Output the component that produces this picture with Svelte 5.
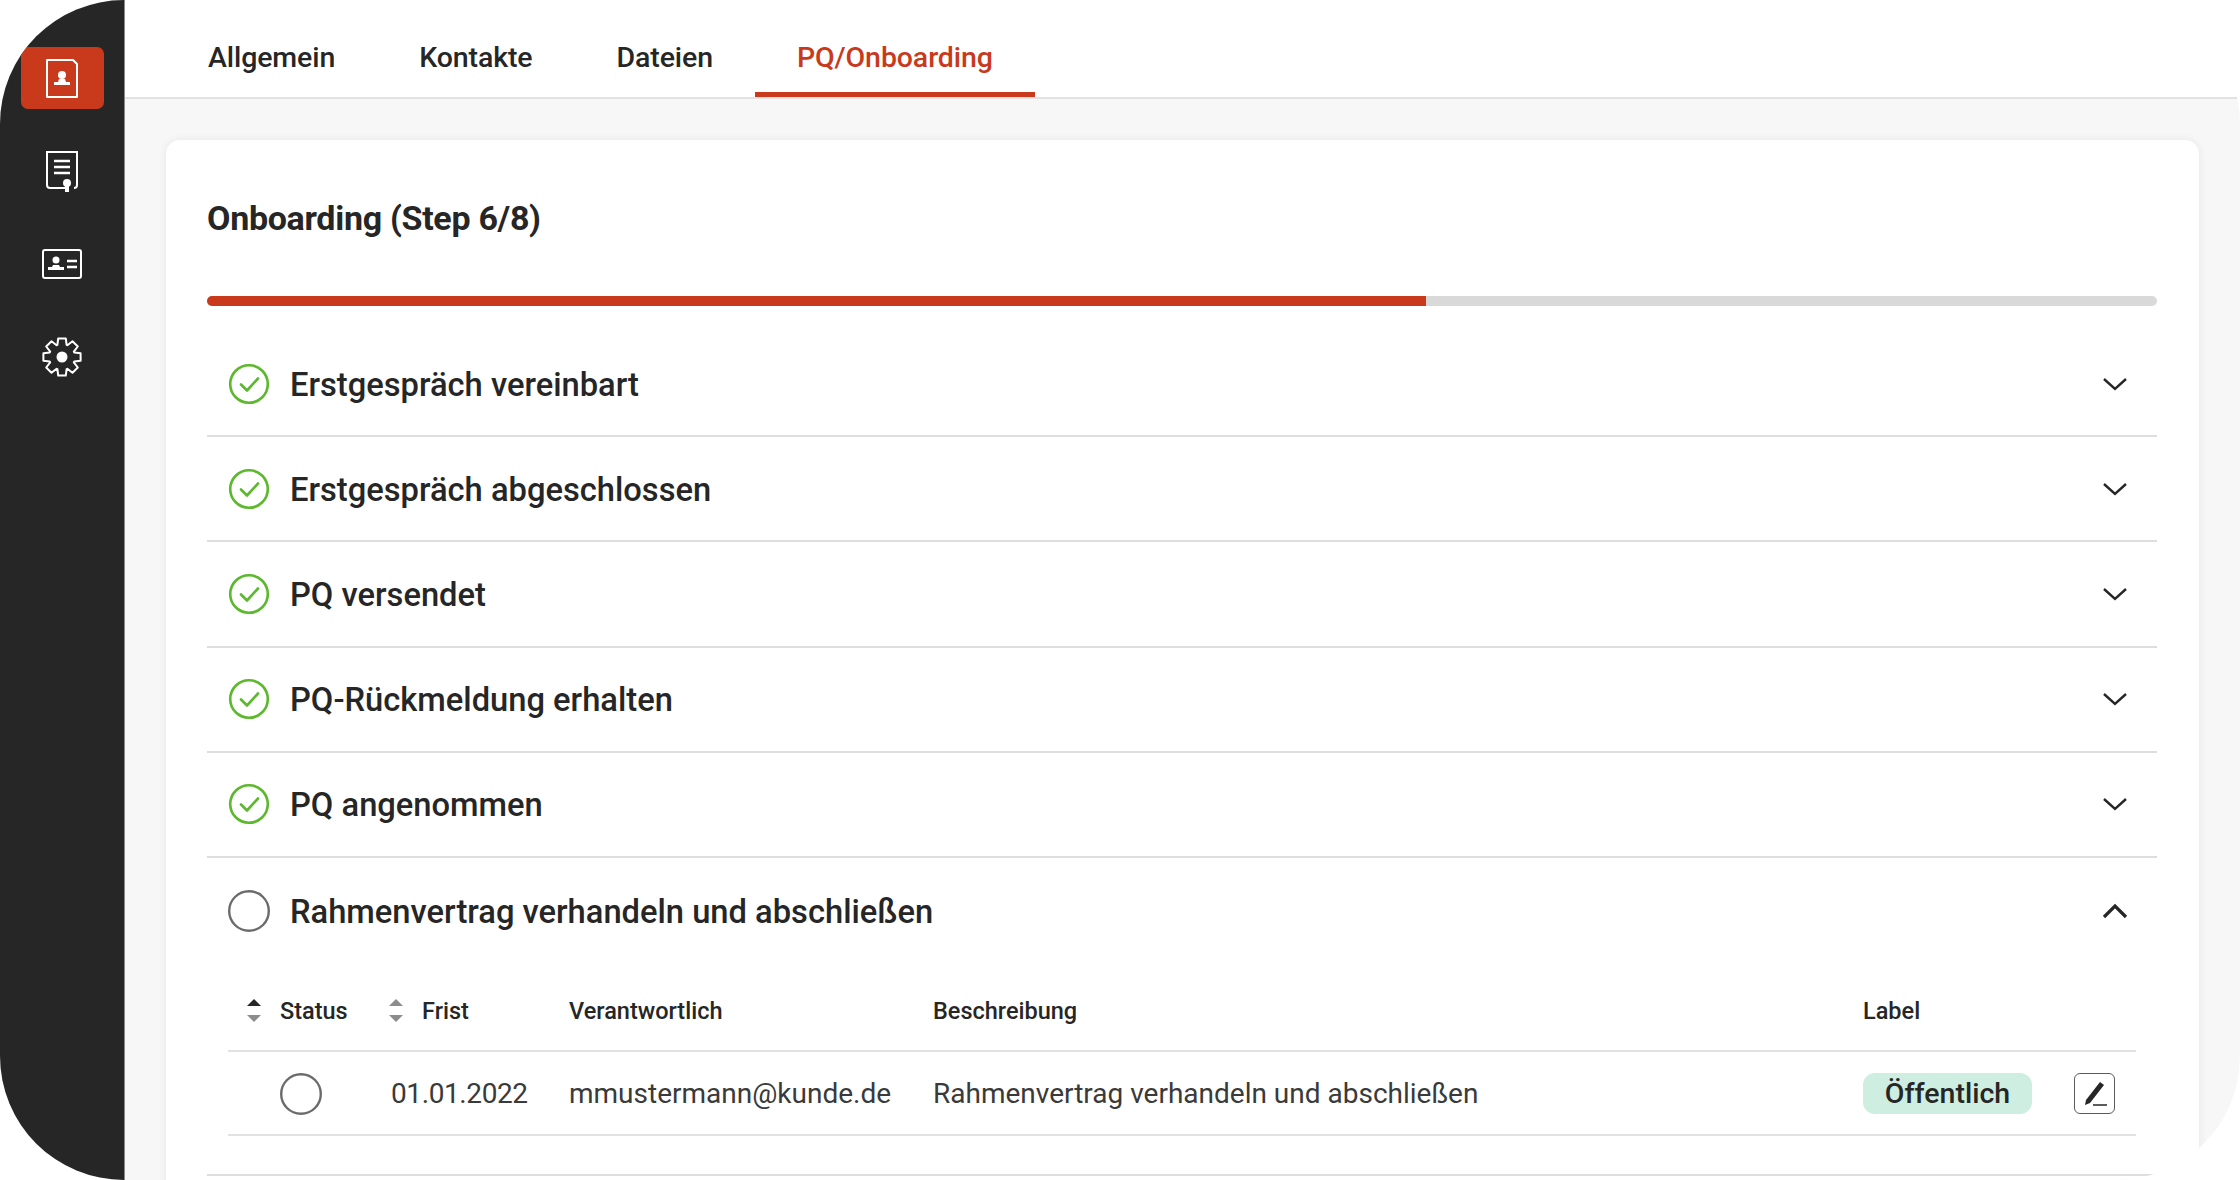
<script>
  const tabs = ['Allgemein', 'Kontakte', 'Dateien', 'PQ/Onboarding'];
  const done = ['Erstgespräch vereinbart', 'Erstgespräch abgeschlossen', 'PQ versendet', 'PQ-Rückmeldung erhalten', 'PQ angenommen'];

  // 8 tooth gear for the settings icon
  function gearPath(cx, cy) {
    const pts = [];
    for (let i = 0; i < 8; i++) {
      const a = (i * Math.PI) / 4 - Math.PI / 2;
      [[-0.36, 13], [-0.2, 19], [0.2, 19], [0.36, 13]].forEach(([d, r]) => {
        pts.push(`${(cx + r * Math.cos(a + d)).toFixed(1)} ${(cy + r * Math.sin(a + d)).toFixed(1)}`);
      });
    }
    return 'M' + pts.join('L') + 'Z';
  }
</script>

<div class="app">
  <nav class="sidebar">
    <button class="nav-btn active" aria-label="Kontakt">
      <svg width="40" height="44" viewBox="0 0 40 44" fill="none" stroke="#fff" stroke-width="2">
        <path d="M5 4h26l4 4v33H5z" stroke-linejoin="round" />
        <circle cx="20" cy="19" r="4" fill="#fff" stroke="none" />
        <path d="M17 23h6l1 3h4v3H12v-3h4z" fill="#fff" stroke="none" />
      </svg>
    </button>
    <button class="nav-btn" aria-label="Vertrag">
      <svg width="40" height="44" viewBox="0 0 40 44" fill="none" stroke="#fff" stroke-width="2">
        <path d="M24 39H8a3 3 0 0 1-3-3V3h30v33a3 3 0 0 1-3 3" />
        <path d="M12 12h16M12 18h16M12 24h16" stroke-width="2.4" />
        <circle cx="25" cy="34" r="4" fill="#fff" stroke="none" />
        <path d="M23 36h4v7h-4z" fill="#fff" stroke="none" />
      </svg>
    </button>
    <button class="nav-btn" aria-label="Ausweis">
      <svg width="44" height="34" viewBox="0 0 44 34" fill="none" stroke="#fff" stroke-width="2">
        <rect x="3" y="3" width="38" height="28" rx="2" />
        <circle cx="16" cy="13" r="3.5" fill="#fff" stroke="none" />
        <path d="M13 18h6l1 2h4v3H8v-3h4z" fill="#fff" stroke="none" />
        <path d="M27 14h10M27 20h10" stroke-width="2.4" />
      </svg>
    </button>
    <button class="nav-btn" aria-label="Einstellungen">
      <svg width="44" height="44" viewBox="0 0 44 44" fill="none" stroke="#fff" stroke-width="2">
        <path d={gearPath(22, 22)} stroke-linejoin="round" />
        <circle cx="22" cy="22" r="5.5" fill="#fff" stroke="none" />
      </svg>
    </button>
  </nav>

  <main class="main">
    <div class="tabs">
      {#each tabs as tab, i}
        <span class="tab" class:active={i === 3}>{tab}</span>
      {/each}
    </div>

    <div class="content">
      <section class="card">
        <h2 class="title">Onboarding (Step 6/8)</h2>
        <div class="progress"><div class="progress-fill" style="width: 62.5%"></div></div>

        {#each done as label}
          <div class="step">
            <svg class="step-icon" width="42" height="42" viewBox="0 0 42 42" fill="none" stroke="#5cb82c" stroke-width="2.6">
              <circle cx="21" cy="21" r="18.8" />
              <path d="M13 21.5l6 6 11-12" stroke-linecap="round" stroke-linejoin="round" />
            </svg>
            <span class="step-label">{label}</span>
            <svg class="chevron" width="26" height="16" viewBox="0 0 26 16" fill="none" stroke="#262626" stroke-width="2.4">
              <path d="M2 3l11 10L24 3" />
            </svg>
          </div>
        {/each}

        <div class="step open">
          <svg class="step-icon" width="42" height="42" viewBox="0 0 42 42" fill="none" stroke="#6b6b6b" stroke-width="2.4">
            <circle cx="21" cy="21" r="19.8" />
          </svg>
          <span class="step-label">Rahmenvertrag verhandeln und abschließen</span>
          <svg class="chevron" width="26" height="16" viewBox="0 0 26 16" fill="none" stroke="#262626" stroke-width="3.2">
            <path d="M2 14L13 3l11 11" />
          </svg>
        </div>

        <div class="task-table">
          <div class="cell head status-head">
            <span class="sort first"><i class="up"></i><i class="down"></i></span>Status
          </div>
          <div class="cell head frist-head">
            <span class="sort"><i class="up"></i><i class="down"></i></span>Frist
          </div>
          <div class="cell head">Verantwortlich</div>
          <div class="cell head">Beschreibung</div>
          <div class="cell head">Label</div>

          <div class="cell body status-cell">
            <svg width="42" height="42" viewBox="0 0 42 42" fill="none" stroke="#6b6b6b" stroke-width="2.4">
              <circle cx="21" cy="21" r="19.8" />
            </svg>
          </div>
          <div class="cell body date-cell">01.01.2022</div>
          <div class="cell body">mmustermann@kunde.de</div>
          <div class="cell body">Rahmenvertrag verhandeln und abschließen</div>
          <div class="cell body label-cell">
            <span class="pill">Öffentlich</span>
            <button class="edit" aria-label="Bearbeiten">
              <svg width="30" height="30" viewBox="0 0 30 30" fill="none">
                <path d="M6 21L20 3l4 3-14 18-5 2z" fill="#262626" />
                <path d="M13 26h14" stroke="#262626" stroke-width="1.6" />
              </svg>
            </button>
          </div>
        </div>

        <div class="last-line"></div>
      </section>
    </div>
  </main>
</div>

<style>
  :global(body) {
    margin: 0;
    background: #fff;
    font-family: Roboto, "Liberation Sans", sans-serif;
    color: #262626;
  }

  .app {
    display: flex;
    width: 2240px;
    height: 1180px;
    border-radius: 124px;
    overflow: hidden;
    background: #fff;
  }

  .sidebar {
    flex: 0 0 125px;
    box-sizing: border-box;
    display: flex;
    flex-direction: column;
    gap: 31px;
    padding: 47px 20px 0 21px;
    background: #262626;
    border-right: 1px solid #8a8a8a;
  }

  .nav-btn {
    height: 62px;
    display: flex;
    align-items: center;
    justify-content: center;
    padding: 0 1px 0 0;
    border: 0;
    border-radius: 7px;
    background: transparent;
  }

  .nav-btn.active {
    background: #c93a1c;
  }

  .main {
    flex: 1;
    min-width: 0;
    display: flex;
    flex-direction: column;
  }

  .tabs {
    display: flex;
    box-sizing: border-box;
    height: 99px;
    padding-left: 41px;
    align-items: stretch;
    border-bottom: 2px solid #e2e2e2;
    background: #fff;
  }

  .tab {
    display: flex;
    align-items: center;
    box-sizing: border-box;
    height: 97px;
    padding: 22px 42px 0;
    font-size: 28.5px;
    font-weight: 500;
    letter-spacing: -0.1px;
    border-bottom: 5px solid transparent;
  }

  .tab.active {
    color: #c93a1c;
    border-bottom-color: #c93a1c;
  }

  .content {
    flex: 1;
    min-height: 0;
    overflow: hidden;
    padding: 41px 41px 0 41px;
    background: #f7f7f7;
  }

  .card {
    box-sizing: border-box;
    height: 1100px;
    padding: 0 42px 0 41px;
    background: #fff;
    border-radius: 14px;
    box-shadow: 0 0 10px rgba(0, 0, 0, 0.07);
  }

  .title {
    margin: 0;
    padding-top: 57px;
    height: 99px;
    box-sizing: border-box;
    font-size: 34px;
    line-height: 42px;
    font-weight: 700;
    letter-spacing: -0.3px;
  }

  .progress {
    height: 10px;
    margin-top: 57px;
    margin-bottom: 26px;
    border-radius: 5px;
    background: #d9d9d9;
    overflow: hidden;
  }

  .progress-fill {
    height: 100%;
    background: #c93a1c;
  }

  .step {
    display: flex;
    align-items: center;
    box-sizing: border-box;
    height: 105.2px;
    padding: 0 29px 0 21px;
    border-bottom: 2px solid #dedede;
  }

  .step.open {
    border-bottom: 0;
  }

  .step-icon {
    flex: none;
    margin-right: 20px;
  }

  .step-label {
    flex: 1;
    font-size: 32.7px;
    font-weight: 500;
    padding-top: 2px;
  }

  .task-table {
    display: grid;
    grid-template-columns: 153px 188px 364px 930px 273px;
    margin: 0 21px;
  }

  .cell {
    display: flex;
    align-items: center;
    box-sizing: border-box;
    border-bottom: 2px solid #e2e2e2;
  }

  .head {
    height: 89px;
    padding-top: 8px;
    font-size: 23.5px;
    font-weight: 500;
  }

  .status-head {
    padding-left: 19px;
  }

  .frist-head {
    padding-left: 8px;
  }

  .sort {
    display: flex;
    flex-direction: column;
    gap: 9px;
    width: 14px;
    margin-right: 19px;
  }

  .sort i {
    display: block;
    width: 0;
    height: 0;
    border-left: 7px solid transparent;
    border-right: 7px solid transparent;
  }

  .sort .up {
    border-bottom: 7px solid #8c8c8c;
  }

  .sort .down {
    border-top: 7px solid #8c8c8c;
  }

  .sort.first .up {
    border-bottom-color: #262626;
  }

  .body {
    height: 84px;
    padding-top: 1px;
    font-size: 28px;
    font-weight: 400;
    color: #3a3a3a;
  }

  .status-cell {
    padding-left: 52px;
  }

  .date-cell {
    padding-left: 10px;
    letter-spacing: -0.4px;
  }

  .label-cell {
    justify-content: space-between;
    padding-right: 21px;
  }

  .pill {
    display: flex;
    align-items: center;
    justify-content: center;
    width: 169px;
    height: 41px;
    border-radius: 12px;
    background: #cdeee0;
    font-size: 28.5px;
    font-weight: 500;
    color: #262626;
  }

  .edit {
    display: flex;
    align-items: center;
    justify-content: center;
    width: 41px;
    height: 41px;
    padding: 0;
    box-sizing: border-box;
    border: 1.5px solid #5a5a5a;
    border-radius: 6px;
    background: #fff;
  }

  .last-line {
    margin-top: 38px;
    border-bottom: 2px solid #dedede;
  }
</style>
